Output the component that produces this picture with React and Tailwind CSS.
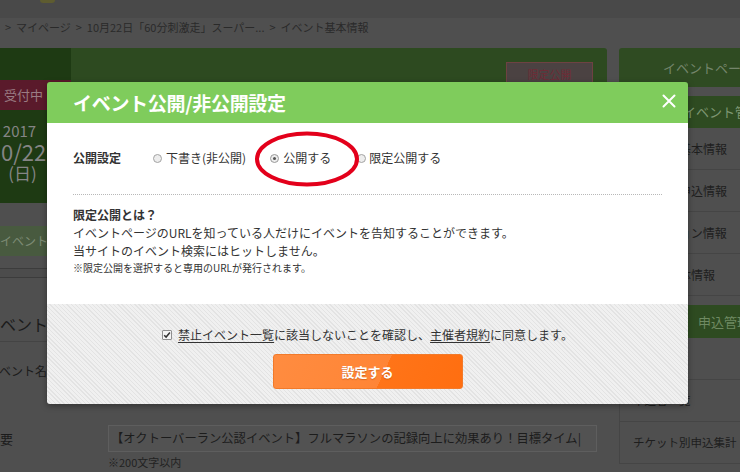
export default function App() {
  const rows1 = ["イベント基本情報", "チケット申込情報", "ロケーション情報", "主催者団体情報"];
  const rows2 = ["申込状況", "申込者一覧", "チケット別申込集計"];
  return (
    <div className="relative w-[740px] h-[472px] overflow-hidden bg-[#4f4f4f] font-['Noto_Sans_CJK_JP',sans-serif]">
      {/* top bar */}
      <div className="h-[18px] bg-[#494949]">
        <div className="ml-[40px] w-[15px] h-[3px] rounded-b-[3px] bg-[#5e5c30]" />
      </div>
      {/* breadcrumb */}
      <div className="h-[30px] pl-[5px] pt-[2px] text-[11px] leading-[14px] text-[#2a2a2a] whitespace-nowrap">
        &gt;&nbsp; マイページ &nbsp;&gt;&nbsp; 10月22日「60分刺激走」スーパー... &nbsp;&gt;&nbsp; イベント基本情報
      </div>

      <div className="flex gap-[12px]">
        {/* main column */}
        <div className="w-[607px] shrink-0">
          <div className="h-[155px] flex rounded-tr-[3px] overflow-hidden">
            <div className="w-[71px] shrink-0 overflow-hidden bg-[#1e3a13]">
              <div className="ml-[-36px] w-[107px] flex flex-col items-center text-[#858585]">
                <div className="mt-[32px] h-[30px] w-full bg-[#5a1a2b] flex items-center justify-center text-[13px] text-[#9a7c83]">
                  <span className="ml-[12px]">受付中</span>
                </div>
                <div className="mt-[12px] text-[15px] leading-[17px] pl-[4px]">2017</div>
                <div className="mt-[1px] text-[22px] leading-[22px]">10/22</div>
                <div className="mt-[1px] text-[17px] leading-[19px] pl-[10px]">(日)</div>
              </div>
            </div>
            <div className="flex-1 bg-[#2d4a20] flex justify-end">
              <div className="mt-[14px] mr-[14px] w-[87px] h-[24px] border border-[#6e4242] bg-[#4b4242] flex items-center justify-center text-[11px] text-[#6f2b36]">
                限定公開
              </div>
            </div>
          </div>
          <div className="mt-[23px] h-[30px] w-[140px] bg-[#485a3f] flex items-center text-[12px] text-[#7e8c76] whitespace-nowrap">
            イベント基本情報
          </div>
          <div className="mt-[12px] h-[10px] border-y border-[#3c3c3c] bg-[#4c4c4c]" />
          <div className="h-[64px] border-b border-[#444] flex items-end pb-[7px] overflow-hidden">
            <div className="ml-[-16px] text-[16px] leading-[20px] text-[#1b1b1b] whitespace-nowrap">イベント基本情報</div>
          </div>
          <div className="h-[70px] pt-[20px] overflow-hidden">
            <div className="ml-[-13px] text-[12px] leading-[18px] text-[#1b1b1b] whitespace-nowrap">イベント名</div>
          </div>
          <div className="mt-[13px] flex overflow-hidden">
            <div className="w-[108px] shrink-0 h-[27px] flex items-center">
              <div className="ml-[-13px] text-[13px] text-[#1b1b1b]">概要</div>
            </div>
            <div>
              <div className="w-[489px] h-[27px] border border-[#5e5e5e] bg-[#525252] flex items-center pl-[2px] overflow-hidden whitespace-nowrap text-[12.3px] text-[#1c1c1c]">
                【オクトーバーラン公認イベント】フルマラソンの記録向上に効果あり！目標タイム|
              </div>
              <div className="mt-[3px] text-[11px] leading-[14px] text-[#222]">※200文字以内</div>
            </div>
          </div>
        </div>

        {/* sidebar */}
        <div className="w-[200px] shrink-0">
          <div className="h-[39px] rounded-[3px] bg-[#2f4b22] flex items-center pl-[44px] text-[13px] text-[#74856b] whitespace-nowrap">
            イベントページ
          </div>
          <div className="mt-[9px] h-[32px] rounded-t-[3px] bg-[#2e4b21] flex items-center pl-[64px] text-[13px] text-[#7e9672]">
            イベント管理
          </div>
          {rows1.map((r) => (
            <div key={r} className="h-[42px] border-b border-l border-[#454545] flex items-center pl-[11px] text-[12px] text-[#1e1e1e] whitespace-nowrap">
              {r}
            </div>
          ))}
          <div className="mt-[9px] h-[33px] rounded-t-[3px] bg-[#2e4b21] flex items-center pl-[79px] text-[13px] text-[#6f8a62]">
            申込管理
          </div>
          {rows2.map((r) => (
            <div key={r} className="h-[42px] border-b border-l border-[#454545] flex items-center pl-[13px] text-[11.5px] text-[#1e1e1e] whitespace-nowrap">
              {r}
            </div>
          ))}
        </div>
      </div>

      {/* modal */}
      <div className="absolute left-[47px] top-[82px] w-[641px] h-[322px] rounded-[3px] overflow-hidden shadow-[0_2px_6px_rgba(0,0,0,0.35)] flex flex-col">
        <div className="h-[41px] shrink-0 bg-[#7fcc5c] flex items-center justify-between pl-[26px] pr-[12px]">
          <div className="text-[19px] font-bold text-white leading-[24px] tracking-[-0.3px]">イベント公開/非公開設定</div>
          <svg width="14" height="14" viewBox="0 0 14 14" className="mt-[-4px]">
            <path d="M1.5 1.5 L12.5 12.5 M12.5 1.5 L1.5 12.5" stroke="white" strokeWidth="2" strokeLinecap="round" />
          </svg>
        </div>
        <div className="h-[181px] shrink-0 bg-white px-[26px] pt-[26px] text-[#333]">
          <div className="flex items-center h-[18px] text-[12px] whitespace-nowrap">
            <div className="font-bold w-[80px]">公開設定</div>
            <div className="flex items-center">
              <span className="w-[9px] h-[9px] rounded-full border border-[#a3a3a3] bg-[#ededed]" />
              <span className="ml-[4px]">下書き(非公開)</span>
            </div>
            <div className="flex items-center ml-[24px]">
              <span className="w-[9px] h-[9px] rounded-full border border-[#9a9a9a] bg-[#ededed] flex items-center justify-center">
                <span className="w-[3px] h-[3px] rounded-full bg-[#555]" />
              </span>
              <span className="ml-[4px]">公開する</span>
            </div>
            <div className="flex items-center ml-[26px]">
              <span className="w-[9px] h-[9px] rounded-full border border-[#a3a3a3] bg-[#ededed]" />
              <span className="ml-[3px]">限定公開する</span>
            </div>
          </div>
          <div className="mt-[27px] border-t border-dotted border-[#b8b8b8]" />
          <div className="mt-[11px] text-[12px] leading-[18px] font-bold">限定公開とは？</div>
          <div className="text-[12px] leading-[18px]">イベントページのURLを知っている人だけにイベントを告知することができます。</div>
          <div className="text-[12px] leading-[18px]">当サイトのイベント検索にはヒットしません。</div>
          <div className="text-[10px] leading-[16px]">※限定公開を選択すると専用のURLが発行されます。</div>
        </div>
        <div className="flex-1 bg-[repeating-linear-gradient(45deg,#e3e3e3_0px,#e3e3e3_1px,#f0f0f0_1px,#f0f0f0_3px)] flex flex-col items-center pt-[22px]">
          <div className="flex items-center h-[18px] text-[12px] text-[#333] whitespace-nowrap">
            <span className="w-[10px] h-[10px] border border-[#8f8f8f] bg-[#f4f4f4] rounded-[1px] flex items-center justify-center mr-[6px]">
              <svg width="8" height="8" viewBox="0 0 8 8">
                <path d="M1.2 4.2 L3.1 6.1 L6.9 1.6" stroke="#333" strokeWidth="1.5" fill="none" />
              </svg>
            </span>
            <span className="underline underline-offset-2">禁止イベント一覧</span>
            <span>に該当しないことを確認し、</span>
            <span className="underline underline-offset-2">主催者規約</span>
            <span>に同意します。</span>
          </div>
          <div className="mt-[10px] w-[190px] h-[35px] rounded-[3px] border border-[#f27a2a] bg-[linear-gradient(115deg,#ff8c40_0%,#ff8536_58%,#ff7418_58%,#ff6e10_100%)] flex items-center justify-center text-[13px] font-bold text-white [text-shadow:0_1px_1px_rgba(150,60,0,0.4)]">
            設定する
          </div>
        </div>
      </div>

      {/* red annotation ellipse */}
      <svg className="absolute left-[254px] top-[131px]" width="106" height="56" viewBox="0 0 106 56">
        <ellipse cx="53" cy="28" rx="50" ry="25.5" stroke="#e3001b" strokeWidth="4" fill="none" />
      </svg>
    </div>
  );
}
